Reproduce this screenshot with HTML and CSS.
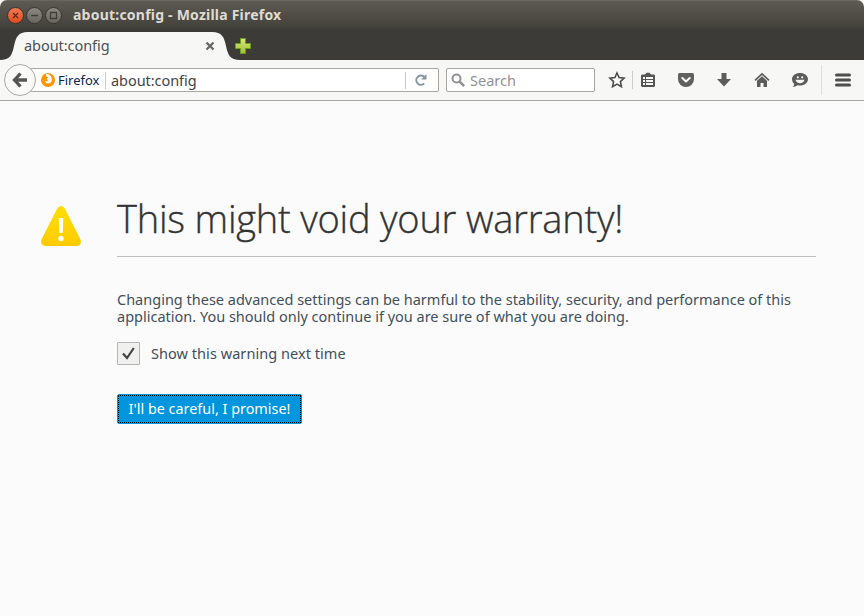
FILE: index.html
```html
<!DOCTYPE html>
<html lang="en">
<head>
<meta charset="utf-8">
<title>about:config - Mozilla Firefox</title>
<link rel="stylesheet" href="styles.css">
</head>
<body>
<div class="window">
  <header class="titlebar">
    <svg class="controls" width="58" height="18" viewBox="0 0 58 18">
      <defs>
        <linearGradient id="red" x1="0" y1="0" x2="0" y2="1"><stop offset="0" stop-color="#f37b55"/><stop offset="1" stop-color="#dc4b1d"/></linearGradient>
        <linearGradient id="gray" x1="0" y1="0" x2="0" y2="1"><stop offset="0" stop-color="#8d8a82"/><stop offset="1" stop-color="#68655f"/></linearGradient>
      </defs>
      <g stroke="#373531" stroke-width="1"><circle cx="9.500" cy="8.500" r="8" fill="url(#red)"/><circle cx="28.500" cy="8.500" r="8" fill="url(#gray)"/><circle cx="47.500" cy="8.500" r="8" fill="url(#gray)"/></g>
      <g stroke="#403d38" stroke-width="1.300" fill="none"><path d="M7 6l5 5M12 6l-5 5" stroke="#622c1b"/><path d="M25 8.500h7M44.500 5.500h6v6h-6z"/></g>
    </svg>
    <span class="window-title">about:config - Mozilla Firefox</span>
  </header>
  <nav class="tabs">
    <div class="tab">
      <svg class="tab-shape" width="240" height="28" viewBox="0 0 240 28"><path d="M0 28C10 28 12 23 14 14C16 5 18 0 28 0H212C222 0 224 5 226 14C228 23 230 28 240 28Z" fill="#f7f7f5"/></svg>
      <span class="tab-title">about:config</span>
      <svg class="tab-close" width="10" height="10" viewBox="0 0 10 10"><path d="M1.500 1.500l7 7M8.500 1.500l-7 7" stroke="#666" stroke-width="2.300"/></svg>
    </div>
    <svg class="new-tab" width="18" height="18" viewBox="0 0 18 18"><defs><linearGradient id="plus" x1="0" y1="0" x2="0" y2="1"><stop offset="0" stop-color="#d8e87b"/><stop offset="1" stop-color="#9fbf31"/></linearGradient></defs><path d="M6.500 1.500h5v5h5v5h-5v5h-5v-5h-5v-5h5z" fill="url(#plus)" stroke="#6c9c22"/></svg>
  </nav>
  <div class="toolbar">
    <svg class="back" width="32" height="32" viewBox="0 0 32 32"><circle cx="16" cy="16" r="15.500" fill="#fafaf9" stroke="#aaa7a2"/><path d="M16.500 9.500L10.500 16l6 6.500M11 16h12" fill="none" stroke="#555" stroke-width="3.300"/></svg>
    <div class="urlbar">
      <svg class="brand" width="14" height="14" viewBox="0 0 14 14"><circle cx="7" cy="7" r="7" fill="#ff9500"/><path d="M4.800 1.200Q7 .6 9 2.300Q11.300 4 10.900 7.200Q10 10.500 7 10.500Q4.200 10.300 3.600 7.800Q5.500 9.300 7.600 7.300Q5.800 7.200 5.700 5.700L7.300 4.200L5.200 3.500Z" fill="#fff"/></svg>
      <span class="identity">Firefox</span>
      <span class="address">about:config</span>
      <svg class="reload" width="14" height="14" viewBox="0 0 14 14"><path d="M10.200 10.400A4.600 4.600 0 1 1 10 3.800" fill="none" stroke="#8594a1" stroke-width="2"/><path d="M12.500 1v5.500H7z" fill="#8594a1"/></svg>
    </div>
    <div class="searchbar">
      <svg width="15" height="15" viewBox="0 0 15 15"><circle cx="5.500" cy="5.500" r="4" fill="none" stroke="#929292" stroke-width="2"/><path d="M8.500 8.500l4.700 4.700" stroke="#929292" stroke-width="2.500"/></svg>
      <span class="placeholder">Search</span>
    </div>
    <div class="tools">
      <svg class="star" width="18" height="18" viewBox="0 0 18 18"><path d="M9 2l2.100 4.600 5 .6-3.700 3.400 1 5L9 13.100l-4.400 2.500 1-5L1.900 7.200l5-.6z" fill="#fdfdfd" stroke="#4d4d4d" stroke-width="1.600"/></svg>
      <i class="divider"></i>
      <svg class="list" width="16" height="16" viewBox="0 0 16 16"><path d="M5 2.500L6.500 .8h3L11 2.500h3l1 1V14l-1 1H2l-1-1V3.500l1-1z" fill="#555"/><path d="M3 5h2v2H3zM6 5h7v2H6zM3 8h2v2H3zM6 8h7v2H6zM3 11h2v2H3zM6 11h7v2H6z" fill="#f7f7f5"/></svg>
      <svg class="pocket" width="18" height="16" viewBox="0 0 18 16"><path d="M2.500 1h13q1.500 0 1.500 1.500V7a8 8 0 0 1-16 0V2.500Q1 1 2.500 1z" fill="#606060"/><path d="M5.300 6L9 9.500 12.700 6" fill="none" stroke="#fff" stroke-width="2" stroke-linecap="round" stroke-linejoin="round"/></svg>
      <svg class="download" width="16" height="16" viewBox="0 0 16 16"><path d="M5.500 1h5v6H15l-7 7.500L1 7h4.500z" fill="#5c5c5c"/></svg>
      <svg class="home" width="16" height="16" viewBox="0 0 16 16"><path d="M1 8.300L8 1.800l7 6.500" fill="none" stroke="#5c5c5c" stroke-width="1.700"/><path d="M3 8.700l5-4.500 5 4.500V15H9.500v-4h-3v4H3z" fill="#5c5c5c"/></svg>
      <svg class="chat" width="18" height="16" viewBox="0 0 18 16"><path d="M9 1c4.500 0 8 2.700 8 6.200s-3.500 6.300-8 6.300q-1.500 0-2.500-.3Q4.800 15 1.500 15q1.700-1.200 1.700-3Q1 10 1 7.200C1 3.700 4.500 1 9 1z" fill="#5c5c5c"/><circle cx="6.800" cy="5.300" r="1.100" fill="#f7f7f5"/><circle cx="11.200" cy="5.300" r="1.100" fill="#f7f7f5"/><path d="M4.500 7.800h9q-1 3.400-4.500 3.400T4.500 7.800z" fill="#f7f7f5"/></svg>
      <i class="divider tall"></i>
      <svg class="menu" width="16" height="14" viewBox="0 0 16 14"><path d="M1.500 2h13M1.500 7h13M1.500 12h13" stroke="#4d4d4d" stroke-width="3" stroke-linecap="round"/></svg>
    </div>
  </div>
  <main class="page">
    <svg class="warning" width="42" height="42" viewBox="0 0 42 42"><defs><linearGradient id="warn" x1="0" y1="0" x2="0" y2="1"><stop offset="0" stop-color="#ffdf00"/><stop offset="1" stop-color="#ffcb00"/></linearGradient></defs><path d="M17.500 3Q21-1.200 24.500 3L40.300 34Q42.500 40.500 36.500 41H5.500Q-.5 40.500 1.700 34z" fill="url(#warn)"/><path d="M18.700 13h4.600l-.5 15h-3.600z" fill="#fff"/><circle cx="21" cy="33.500" r="2.700" fill="#fff"/></svg>
    <section class="message">
      <h1><span>This might void your warranty!</span></h1>
      <p>Changing these advanced settings can be harmful to the stability, security, and performance of this<br>application. You should only continue if you are sure of what you are doing.</p>
      <label class="check"><span class="box"><svg width="15" height="15" viewBox="0 0 15 15"><path d="M2 7.500l4 4.500 6.800-10" fill="none" stroke="#444" stroke-width="2.200"/></svg></span><span class="check-text">Show this warning next time</span></label>
      <button><span>I'll be careful, I promise!</span></button>
    </section>
  </main>
</div>
</body>
</html>
```
FILE: styles.css
```css
* { box-sizing: border-box; }
body { margin: 0; background: #fff; font: 15px "Noto Sans", "Open Sans", sans-serif; color: #424f5a; }
svg { display: block; flex: none; }
span { white-space: nowrap; }
.window { width: 864px; height: 616px; overflow: hidden; border-radius: 7px 7px 0 0; background: #fbfbfb; }
.titlebar { height: 30px; display: flex; align-items: center; padding-left: 6px; background: linear-gradient(#5c5a52, #44423c 90%, #3c3b37); border-top: 1px solid #69665e; }
.window-title { margin: -2px 0 0 9px; font-size: 14px; line-height: 20px; font-weight: 700; color: #dfdbd2; letter-spacing: .22px; }
.tabs { height: 30px; display: flex; background: #3c3b37; }
.tab { position: relative; width: 234px; height: 28px; margin-top: 2px; display: flex; align-items: center; padding-left: 24px; }
.tab-shape { position: absolute; left: 0; top: 0; }
.tab-title { position: relative; width: 181px; margin-top: -3px; font-size: 14.500px; letter-spacing: -.06px; color: #4b5157; }
.tab-close { position: relative; }
.new-tab { position: relative; margin-top: 7px; }
.toolbar { height: 41px; display: flex; align-items: center; padding-left: 4px; background: #f7f7f5; border-bottom: 1px solid #aaa7a2; }
.back { position: relative; z-index: 1; }
.urlbar { width: 409px; height: 24px; margin-left: -6px; display: flex; align-items: center; padding-left: 10px; background: #fff; border: 1px solid #aaa7a2; border-radius: 2px; }
.identity { width: 48px; height: 17px; line-height: 17px; margin-left: 3px; border-right: 1px solid #ccc; font-size: 13px; color: #092653; }
.address { width: 295px; height: 17px; line-height: 17px; margin-left: 5px; border-right: 1px solid #ccc; font-size: 14.500px; letter-spacing: -.06px; color: #444; }
.reload { margin-left: 8px; }
.searchbar { width: 149px; height: 24px; margin-left: 7px; padding-left: 4px; display: flex; align-items: center; background: #fff; border: 1px solid #aaa7a2; border-radius: 2px; }
.placeholder { margin-left: 4px; font-size: 14.500px; color: #929292; }
.tools { display: flex; align-items: center; margin-left: 13px; }
.divider { width: 1px; height: 18px; margin-left: 6px; background: #ccc; }
.list { margin-left: 7px; }
.pocket { margin-left: 21px; }
.download { margin-left: 21px; }
.home { margin-left: 22px; }
.chat { margin-left: 21px; }
.tall { height: 30px; margin-left: 12px; background: #ddd; }
.menu { margin-left: 13px; }
.page { display: flex; padding: 104px 48px 0 40px; }
.message { width: 699px; margin-left: 35px; }
h1 { margin: -13px 0 34px; height: 65px; border-bottom: 1px solid #bfbfbf; font: 300 38px/52px "Open Sans", sans-serif; letter-spacing: -.2px; color: #333; -webkit-text-stroke: .35px #333; }
p { margin: 0; font-size: 14.500px; line-height: 17px; white-space: nowrap; }
.check { display: flex; align-items: center; height: 23px; margin-top: 17px; }
.box { width: 23px; height: 23px; padding: 3px; background: #f0f0ef; border: 1px solid #b5b5b5; border-radius: 1px; }
.check-text { margin: -2px 0 0 11px; font-size: 14.500px; letter-spacing: .05px; }
button { display: block; width: 185px; height: 30px; margin-top: 29px; padding: 0; border: 1px solid #0095dd; border-radius: 2px; background: #0095dd; color: #fff; font: 14.400px/26px "Noto Sans", sans-serif; outline: 1px dotted #000; outline-offset: -2px; }
```
